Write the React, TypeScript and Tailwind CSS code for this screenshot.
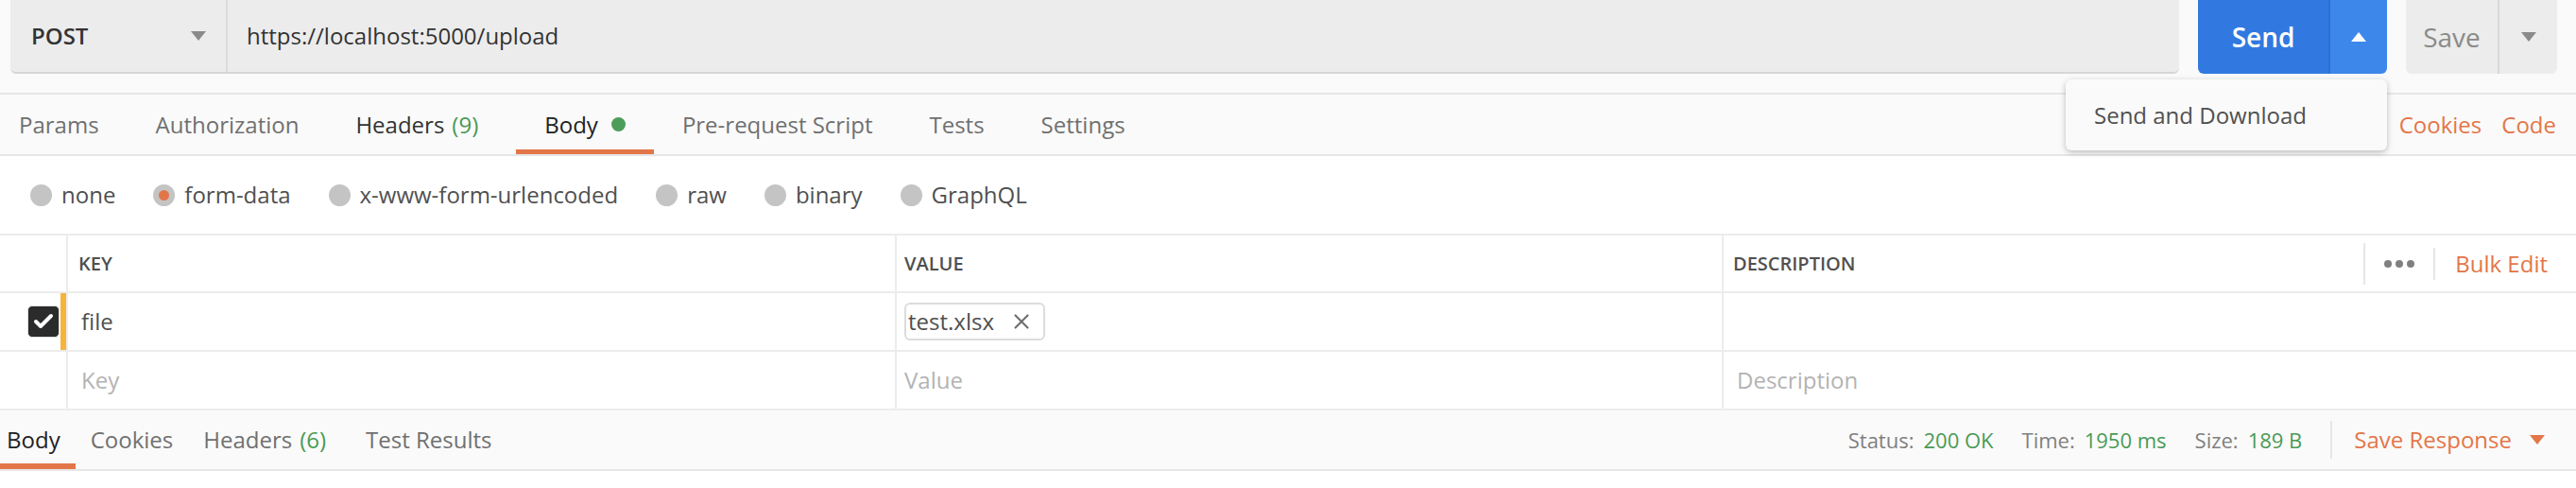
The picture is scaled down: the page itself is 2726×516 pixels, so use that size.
import { Check, X } from 'lucide-react'

const requestTabs = [
  { label: 'Params' },
  { label: 'Authorization' },
  { label: 'Headers', count: '(9)', dark: true },
  { label: 'Body', dot: true, active: true },
  { label: 'Pre-request Script' },
  { label: 'Tests' },
  { label: 'Settings' },
]

const bodyModes = ['none', 'form-data', 'x-www-form-urlencoded', 'raw', 'binary', 'GraphQL']

function Radio({ checked }: { checked?: boolean }) {
  return (
    <span className="w-[23px] h-[23px] rounded-full bg-[#c4c4c4] flex items-center justify-center shrink-0">
      {checked && <span className="w-[11px] h-[11px] rounded-full bg-[#e37648]" />}
    </span>
  )
}

function Caret({ up, className }: { up?: boolean; className: string }) {
  return (
    <svg width="16" height="10" viewBox="0 0 16 10" className={className}>
      <path d={up ? 'M8 0 L16 10 L0 10 Z' : 'M0 0 L16 0 L8 10 Z'} fill="currentColor" />
    </svg>
  )
}

export default function App() {
  return (
    <div className="relative w-[2726px] h-[516px] overflow-hidden bg-white text-[24px] text-[#505050] font-['Open_Sans',sans-serif]">
      {/* request bar */}
      <div className="h-[98px] bg-[#fafafa] overflow-hidden">
        <div className="flex -mt-[8px] h-[86px] pl-[11px] pr-[20px] gap-[20px]">
          <div className="flex flex-1 rounded-[6px] bg-[#ececec] border-b-2 border-[#d6d6d6]">
            <div className="w-[230px] flex items-center justify-between pl-[22px] pr-[21px] pt-[8px] border-r-2 border-[#dcdcdc]">
              <span className="font-semibold text-[#333]">POST</span>
              <Caret className="text-[#8a8a8a]" />
            </div>
            <div className="flex items-center pl-[20px] pt-[8px] text-[#333]">https://localhost:5000/upload</div>
          </div>
          <div className="flex w-[200px] rounded-[6px] overflow-hidden">
            <div className="w-[140px] bg-[#3179e0] border-r-2 border-[#2e6fd2] flex items-center justify-center pt-[8px] text-white text-[28px] font-semibold">
              Send
            </div>
            <div className="flex-1 bg-[#3d87eb] flex items-center justify-center pt-[8px] text-white">
              <Caret up className="" />
            </div>
          </div>
          <div className="flex w-[160px] rounded-[6px] overflow-hidden bg-[#ececec]">
            <div className="w-[99px] border-r-2 border-[#d9d9d9] flex items-center justify-center pt-[8px] text-[28px] text-[#8a8a8a]">
              Save
            </div>
            <div className="flex-1 flex items-center justify-center pt-[8px]">
              <Caret className="text-[#8a8a8a]" />
            </div>
          </div>
        </div>
      </div>

      {/* request tabs */}
      <div className="h-[67px] flex items-stretch justify-between bg-[#fafafa] border-y-2 border-[#e6e6e6]">
        <div className="flex -ml-[10px]">
          {requestTabs.map((t) => (
            <div key={t.label} className="relative flex items-center px-[30px]">
              <span className={t.active ? 'text-[#222]' : t.dark ? 'text-[#333]' : 'text-[#707070]'}>{t.label}</span>
              {t.count && <span className="ml-[8px] mr-[10px] text-[#4a9a55]">{t.count}</span>}
              {t.dot && <span className="ml-[14px] w-[15px] h-[15px] rounded-full bg-[#4e9c59]" />}
              {t.active && <span className="absolute left-0 right-0 bottom-0 h-[5px] bg-[#e37648]" />}
            </div>
          ))}
        </div>
        <div className="flex items-center gap-[21px] pr-[21px] text-[#e37648]">
          <span>Cookies</span>
          <span>Code</span>
        </div>
      </div>

      {/* body modes */}
      <div className="h-[82px] flex items-center pl-[32px] gap-[40px]">
        {bodyModes.map((m) => (
          <div key={m} className="flex items-center gap-[10px]">
            <Radio checked={m === 'form-data'} />
            <span className="text-[#505050]">{m}</span>
          </div>
        ))}
      </div>

      {/* params table */}
      <div className="border-t-2 border-[#ececec]">
        <div className="grid grid-cols-[70px_877px_875px_1fr] h-[61px] border-b-2 border-[#ececec] text-[20px] font-semibold text-[#505050]">
          <div />
          <div className="border-l-2 border-[#ececec] flex items-center pl-[11px]">KEY</div>
          <div className="border-l-2 border-[#ececec] flex items-center pl-[8px]">VALUE</div>
          <div className="border-l-2 border-[#ececec] flex items-center justify-between pl-[10px]">
            <span>DESCRIPTION</span>
            <div className="flex items-center h-full pr-[30px] font-normal text-[24px]">
              <span className="h-[44px] border-l-2 border-[#e6e6e6]" />
              <span className="flex gap-[4px] ml-[20px] mr-[20px]">
                <span className="w-[8px] h-[8px] rounded-full bg-[#808080]" />
                <span className="w-[8px] h-[8px] rounded-full bg-[#808080]" />
                <span className="w-[8px] h-[8px] rounded-full bg-[#808080]" />
              </span>
              <span className="h-[34px] border-l-2 border-[#e6e6e6]" />
              <span className="ml-[21px] text-[#e37648]">Bulk Edit</span>
            </div>
          </div>
        </div>

        <div className="grid grid-cols-[70px_877px_875px_1fr] h-[62px] border-b-2 border-[#ececec]">
          <div className="flex items-center justify-end">
            <span className="w-[34px] h-[34px] rounded-[5px] bg-[#2b2b2b] border border-[#e0e0e0] flex items-center justify-center mr-[1px]">
              <Check size={24} strokeWidth={4} color="#ffffff" />
            </span>
            <span className="self-stretch w-[6px] bg-[#f5b43c]" />
          </div>
          <div className="border-l-2 border-[#ececec] flex items-center pl-[14px]">file</div>
          <div className="border-l-2 border-[#ececec] flex items-center pl-[8px]">
            <span className="flex items-center h-[40px] border-2 border-[#dcdcdc] rounded-[6px] pl-[2px] pr-[10px]">
              test.xlsx
              <X size={26} strokeWidth={2} className="ml-[16px] text-[#707070]" />
            </span>
          </div>
          <div className="border-l-2 border-[#ececec]" />
        </div>

        <div className="grid grid-cols-[70px_877px_875px_1fr] h-[62px] border-b-2 border-[#ececec] text-[#b3b3b3]">
          <div />
          <div className="border-l-2 border-[#ececec] flex items-center pl-[14px]">Key</div>
          <div className="border-l-2 border-[#ececec] flex items-center pl-[8px]">Value</div>
          <div className="border-l-2 border-[#ececec] flex items-center pl-[14px]">Description</div>
        </div>
      </div>

      {/* response bar */}
      <div className="h-[64px] flex items-stretch justify-between bg-[#fafafa] border-b-2 border-[#e6e6e6]">
        <div className="flex -ml-[9px]">
          <div className="relative flex items-center px-[16px] text-[#222]">
            Body
            <span className="absolute left-[9px] right-0 bottom-0 h-[6px] bg-[#e37648]" />
          </div>
          <div className="flex items-center px-[16px] text-[#707070]">Cookies</div>
          <div className="flex items-center pl-[16px] pr-[26px] text-[#707070]">
            Headers<span className="ml-[8px] text-[#4a9a55]">(6)</span>
          </div>
          <div className="flex items-center px-[16px] text-[#707070]">Test Results</div>
        </div>
        <div className="flex items-center pr-[33px] text-[22px]">
          <span className="text-[#808080]">Status:</span>
          <span className="ml-[10px] text-[#4a9a55]">200 OK</span>
          <span className="ml-[30px] text-[#808080]">Time:</span>
          <span className="ml-[10px] text-[#4a9a55]">1950 ms</span>
          <span className="ml-[30px] text-[#808080]">Size:</span>
          <span className="ml-[10px] text-[#4a9a55]">189 B</span>
          <span className="ml-[30px] h-[40px] border-l-2 border-[#e6e6e6]" />
          <span className="ml-[23px] text-[24px] text-[#e37648]">Save Response</span>
          <Caret className="ml-[19px] text-[#e37648]" />
        </div>
      </div>

      {/* send dropdown */}
      <div className="absolute left-[2186px] top-[84px] w-[340px] h-[75px] rounded-[6px] bg-[#fafafa] shadow-[0_2px_6px_rgba(0,0,0,0.25)] flex items-center pl-[30px] text-[#505050]">
        Send and Download
      </div>
    </div>
  )
}
